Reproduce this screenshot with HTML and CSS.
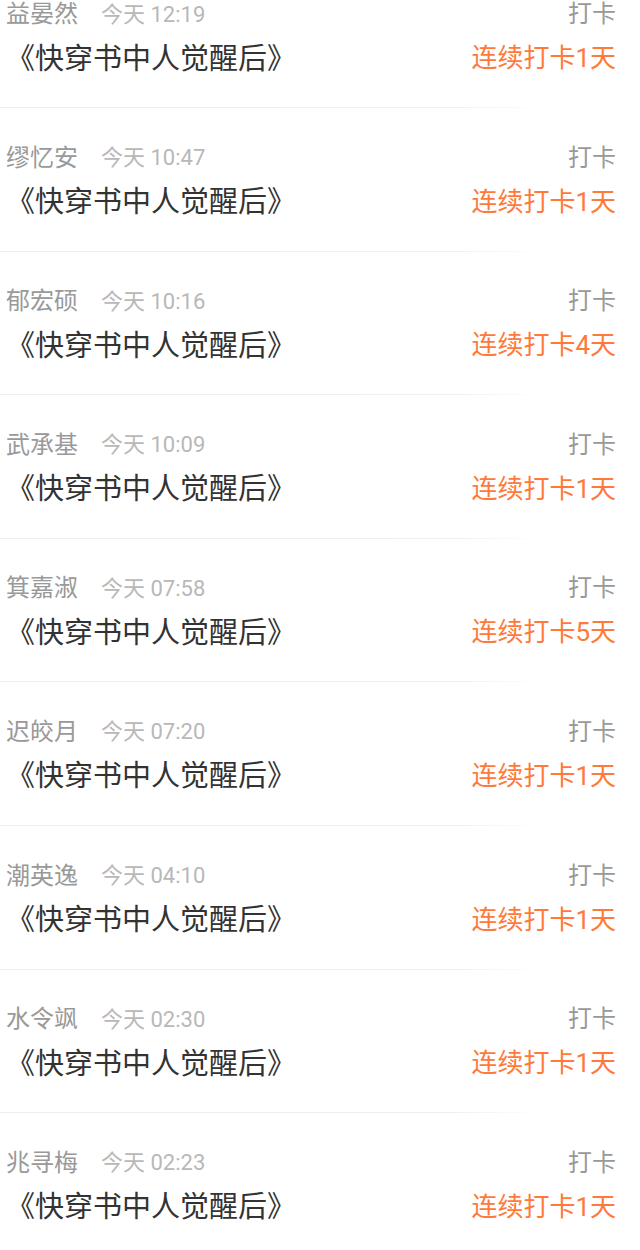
FILE: index.html
```html
<!DOCTYPE html>
<html lang="zh-CN">
<head>
<meta charset="UTF-8">
<meta name="viewport" content="width=device-width, initial-scale=1.0">
<title>打卡记录</title>
<link rel="stylesheet" href="styles.css">
</head>
<body>
<div class="list">
    <div class="item">
        <div class="row">
            <div class="who"><span class="name">益晏然</span><span class="time">今天 12:19</span></div>
            <span class="tag">打卡</span>
        </div>
        <div class="row row-main">
            <span class="book">《快穿书中人觉醒后》</span>
            <span class="streak">连续打卡1天</span>
        </div>
    </div>
    <div class="item">
        <div class="row">
            <div class="who"><span class="name">缪忆安</span><span class="time">今天 10:47</span></div>
            <span class="tag">打卡</span>
        </div>
        <div class="row row-main">
            <span class="book">《快穿书中人觉醒后》</span>
            <span class="streak">连续打卡1天</span>
        </div>
    </div>
    <div class="item">
        <div class="row">
            <div class="who"><span class="name">郁宏硕</span><span class="time">今天 10:16</span></div>
            <span class="tag">打卡</span>
        </div>
        <div class="row row-main">
            <span class="book">《快穿书中人觉醒后》</span>
            <span class="streak">连续打卡4天</span>
        </div>
    </div>
    <div class="item">
        <div class="row">
            <div class="who"><span class="name">武承基</span><span class="time">今天 10:09</span></div>
            <span class="tag">打卡</span>
        </div>
        <div class="row row-main">
            <span class="book">《快穿书中人觉醒后》</span>
            <span class="streak">连续打卡1天</span>
        </div>
    </div>
    <div class="item">
        <div class="row">
            <div class="who"><span class="name">箕嘉淑</span><span class="time">今天 07:58</span></div>
            <span class="tag">打卡</span>
        </div>
        <div class="row row-main">
            <span class="book">《快穿书中人觉醒后》</span>
            <span class="streak">连续打卡5天</span>
        </div>
    </div>
    <div class="item">
        <div class="row">
            <div class="who"><span class="name">迟皎月</span><span class="time">今天 07:20</span></div>
            <span class="tag">打卡</span>
        </div>
        <div class="row row-main">
            <span class="book">《快穿书中人觉醒后》</span>
            <span class="streak">连续打卡1天</span>
        </div>
    </div>
    <div class="item">
        <div class="row">
            <div class="who"><span class="name">潮英逸</span><span class="time">今天 04:10</span></div>
            <span class="tag">打卡</span>
        </div>
        <div class="row row-main">
            <span class="book">《快穿书中人觉醒后》</span>
            <span class="streak">连续打卡1天</span>
        </div>
    </div>
    <div class="item">
        <div class="row">
            <div class="who"><span class="name">水令飒</span><span class="time">今天 02:30</span></div>
            <span class="tag">打卡</span>
        </div>
        <div class="row row-main">
            <span class="book">《快穿书中人觉醒后》</span>
            <span class="streak">连续打卡1天</span>
        </div>
    </div>
    <div class="item">
        <div class="row">
            <div class="who"><span class="name">兆寻梅</span><span class="time">今天 02:23</span></div>
            <span class="tag">打卡</span>
        </div>
        <div class="row row-main">
            <span class="book">《快穿书中人觉醒后》</span>
            <span class="streak">连续打卡1天</span>
        </div>
    </div>
</div>
</body>
</html>
```

FILE: styles.css
```css
body {
    margin: 0;
    padding: 0;
    background-color: #fff;
    font-family: Roboto, "Noto Sans CJK SC", sans-serif;
    overflow: hidden;
}
.list {
    margin-top: -37.5px;
}
.item {
    position: relative;
    height: 143.6px;
    box-sizing: border-box;
    padding: 34px 24px 0 6px;
}
.item::after {
    content: "";
    position: absolute;
    left: 0;
    bottom: -2px;
    width: 540px;
    height: 1px;
    background: linear-gradient(to right, #efefef 0%, #f0f0f0 85%, rgba(240, 240, 240, 0) 100%);
}
.row {
    display: flex;
    justify-content: space-between;
    align-items: center;
    height: 30px;
}
.row-main {
    height: 40px;
    margin-top: 9px;
}
.who {
    display: flex;
    align-items: center;
}
.name {
    font-size: 24px;
    color: #999;
}
.time {
    font-size: 22px;
    color: #b8b8b8;
    margin-left: 23px;
}
.tag {
    font-size: 24px;
    color: #999;
}
.book {
    font-size: 29px;
    color: #333;
}
.streak {
    font-size: 26px;
    color: #ff7a3a;
}
```
